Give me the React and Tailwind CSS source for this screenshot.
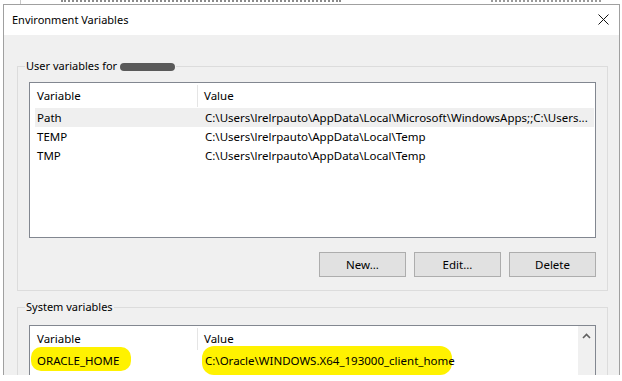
import React from 'react'

const userVars = [
  { name: 'Path', value: 'C:\\Users\\lrelrpauto\\AppData\\Local\\Microsoft\\WindowsApps;;C:\\Users...', selected: true },
  { name: 'TEMP', value: 'C:\\Users\\lrelrpauto\\AppData\\Local\\Temp' },
  { name: 'TMP', value: 'C:\\Users\\lrelrpauto\\AppData\\Local\\Temp' },
]

function Header() {
  return (
    <div className="flex h-[25px] items-center bg-white">
      <div className="flex h-[22px] w-[168px] shrink-0 items-center border-r border-[#e5e5e5] pl-[7px]">Variable</div>
      <div className="pl-[6px]">Value</div>
    </div>
  )
}

function Row({ name, value, selected }) {
  return (
    <div className={`ml-[5px] mr-[1px] flex h-[19px] items-center overflow-hidden whitespace-nowrap ${selected ? 'bg-[#efefef]' : ''}`}>
      <div className="w-[163px] shrink-0 pl-[2px]">{name}</div>
      <div className="pl-[7px]">{value}</div>
    </div>
  )
}

function Button({ children }) {
  return (
    <button className="flex h-[25px] w-[87px] items-center justify-center border border-[#adadad] bg-[#e1e1e1] text-black">
      {children}
    </button>
  )
}

export default function App() {
  return (
    <div className="relative h-[381px] w-[622px] overflow-hidden bg-white text-[11.5px] leading-[16px] text-black font-['Noto_Sans',sans-serif]">
      {/* bits of the window behind */}
      <div className="flex h-[4px] items-start">
        <div className="ml-[20px] h-[4px] w-px bg-[#c8c8c8]" />
        <div className="ml-[40px] h-[2px] w-[280px] border-t-2 border-dotted border-[#8a8a8a]" />
        <div className="ml-[150px] h-[2px] w-[110px] border-t-2 border-dotted border-[#9a9a9a]" />
      </div>

      <div className="ml-[3px] flex h-[371px] w-[617px] flex-col overflow-hidden border-x border-t border-[#a0a0a0]">
        {/* title bar */}
        <div className="flex h-[30px] shrink-0 items-center justify-between bg-white pl-[8px] pr-[10px]">
          <span className="text-[11px]">Environment Variables</span>
          <svg width="11" height="11" viewBox="0 0 11 11" className="mb-[1px]">
            <path d="M0.5 0.5 L10.5 10.5 M10.5 0.5 L0.5 10.5" stroke="#111" strokeWidth="1" />
          </svg>
        </div>

        {/* body */}
        <div className="min-w-0 flex-1 bg-[#f0f0f0] pl-[13px] pr-[11px] pt-[23px]">
          <fieldset className="min-w-0 border border-[#dcdcdc] px-[11px] pb-[13px]">
            <legend className="-ml-[4px] flex items-center px-[1px] text-[11px] leading-[16px]">
              <span>User variables for</span>
              <span className="ml-[3px] mt-[1px] h-[8px] w-[55px] rounded-full bg-[#5a5a5a] blur-[0.7px]" />
            </legend>
            <div className="mt-[8px] h-[156px] overflow-hidden border border-[#828790] bg-white">
              <Header />
              {userVars.map((v) => (
                <Row key={v.name} {...v} />
              ))}
            </div>
            <div className="mt-[14px] flex justify-end gap-[8px]">
              <Button>New...</Button>
              <Button>Edit...</Button>
              <Button>Delete</Button>
            </div>
          </fieldset>

          <fieldset className="mt-[8px] min-w-0 border border-[#dcdcdc] px-[11px]">
            <legend className="-ml-[4px] px-[1px] text-[11px] leading-[16px]">System variables</legend>
            <div className="mt-[10px] flex h-[80px] border border-[#828790] bg-white">
              <div className="min-w-0 flex-1 overflow-hidden">
                <Header />
                <div className="ml-[5px] flex h-[19px] items-center whitespace-nowrap">
                  <div className="relative w-[163px] shrink-0 pl-[2px]">
                    <span className="absolute left-[-4px] top-[-6px] h-[24px] w-[100px] rounded-[10px] bg-[#fff200]" />
                    <span className="relative">ORACLE_HOME</span>
                  </div>
                  <div className="relative pl-[7px]">
                    <span className="absolute left-[4px] top-[-7px] h-[29px] w-[250px] rounded-[12px] bg-[#fff200]" />
                    <span className="relative">C:\Oracle\WINDOWS.X64_193000_client_home</span>
                  </div>
                </div>
                <Row name="OS" value="Windows_NT" />
              </div>
              <div className="flex w-[17px] shrink-0 justify-center bg-[#f0f0f0] pt-[7px]">
                <svg width="9" height="6" viewBox="0 0 9 6">
                  <path d="M1 5 L4.5 1.5 L8 5" fill="none" stroke="#606060" strokeWidth="1.6" />
                </svg>
              </div>
            </div>
          </fieldset>
        </div>
      </div>
    </div>
  )
}
